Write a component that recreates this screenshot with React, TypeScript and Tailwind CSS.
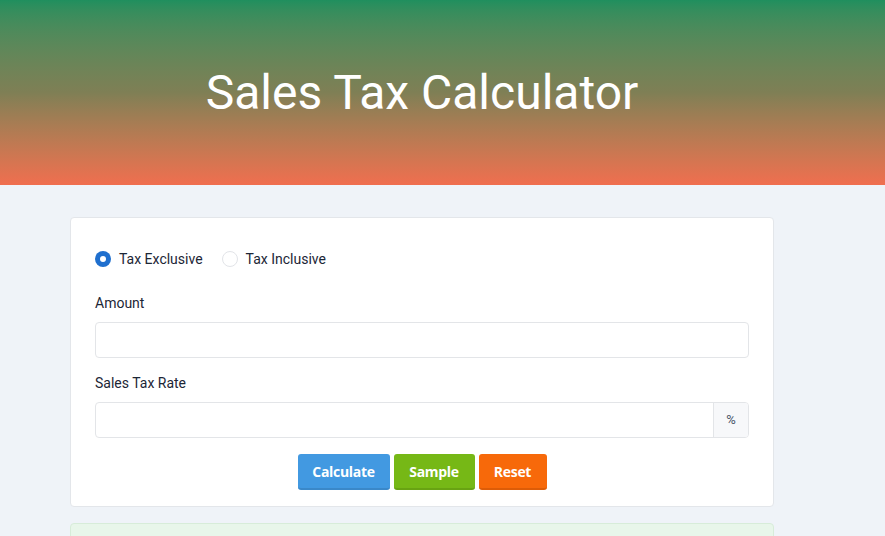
import React from "react";

const App = () => {
  return (
    <div className="min-h-[536px] bg-[#eff3f8] font-['Roboto',sans-serif]">
      {/* Header */}
      <div className="h-[185px] bg-gradient-to-b from-[#1f8f5e] via-[#7f7f55] to-[#f06e4f]">
        <div className="ml-[70px] w-[704px] h-full flex items-center justify-center">
          <h1 className="text-white text-[48px] leading-none font-normal">Sales Tax Calculator</h1>
        </div>
      </div>

      <div className="ml-[70px] w-[704px]">
        {/* Calculator card */}
        <div className="mt-[32px] bg-white border border-[#e3e6ea] rounded-[4px] px-6 pt-6 pb-4">
          {/* Tax type */}
          <div className="mt-[1px] h-8 flex items-center text-[14px] text-[#1c2636]">
            <label className="flex items-center">
              <span className="w-4 h-4 rounded-full bg-[#1f6fce] flex items-center justify-center">
                <span className="w-[6px] h-[6px] rounded-full bg-white" />
              </span>
              <span className="ml-2">Tax Exclusive</span>
            </label>
            <label className="flex items-center ml-[19px]">
              <span className="w-4 h-4 rounded-full border border-[#e2e4e8] bg-white" />
              <span className="ml-2">Tax Inclusive</span>
            </label>
          </div>

          {/* Amount */}
          <div className="mt-[18px] text-[14px] leading-5 text-[#1c2636]">Amount</div>
          <div className="mt-[9px] h-[36px] border border-[#e3e5e8] rounded-[4px] bg-white" />

          {/* Sales Tax Rate */}
          <div className="mt-[15px] text-[14px] leading-5 text-[#1c2636]">Sales Tax Rate</div>
          <div className="mt-[9px] h-[36px] flex border border-[#e3e5e8] rounded-[4px] bg-white overflow-hidden">
            <div className="flex-1" />
            <div className="w-[35px] border-l border-[#e3e5e8] bg-[#f7f8fa] flex items-center justify-center text-[13px] text-[#4a5568]">
              %
            </div>
          </div>

          {/* Buttons */}
          <div className="mt-[16px] flex justify-center gap-1 font-['Open_Sans',sans-serif] text-[14px] font-bold text-white">
            <button className="w-[92px] h-[36px] rounded-[3px] bg-[#4299e1] border-b-2 border-[#3a88c9] tracking-[-0.3px]">
              Calculate
            </button>
            <button className="w-[81px] h-[36px] rounded-[3px] bg-[#76b816] border-b-2 border-[#68a312] tracking-[-0.3px]">
              Sample
            </button>
            <button className="w-[68px] h-[36px] rounded-[3px] bg-[#f7690a] border-b-2 border-[#dd5c07] tracking-[-0.3px]">
              Reset
            </button>
          </div>
        </div>

        {/* Result card */}
        <div className="mt-[16px] h-[40px] bg-[#e8f6ea] border border-[#d7ecd9] rounded-[4px]" />
      </div>
    </div>
  );
};

export default App;
